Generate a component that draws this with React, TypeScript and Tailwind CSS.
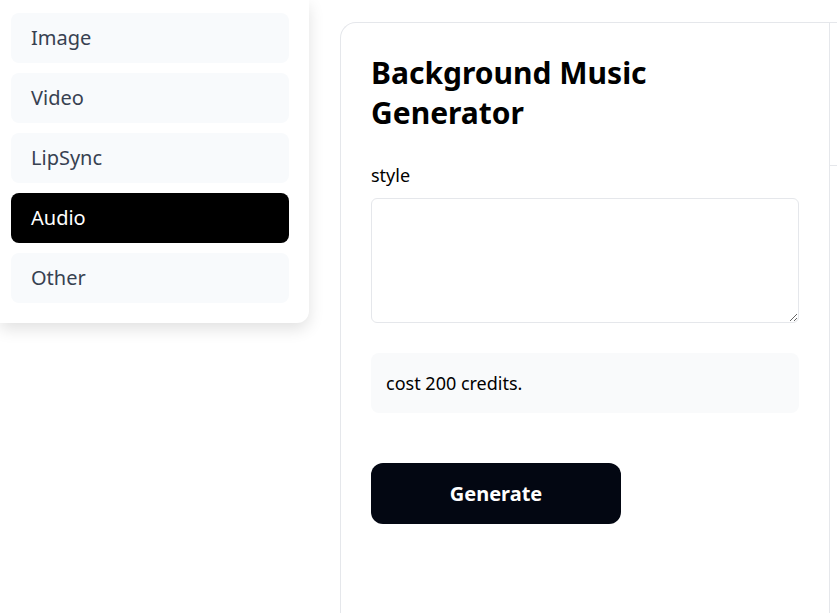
import React from "react";

const categories = ["Image", "Video", "LipSync", "Audio", "Other"];

function CategoryMenu({ active }: { active: string }) {
  return (
    <div className="flex w-[309px] flex-col gap-[10px] rounded-br-xl bg-white pb-5 pl-[11px] pr-5 pt-[13px] shadow-[0_6px_16px_rgba(0,0,0,0.12)]">
      {categories.map((c) => (
        <button
          key={c}
          type="button"
          className={
            c === active
              ? "flex h-[50px] items-center rounded-lg bg-black px-5 text-left text-[20px] text-white"
              : "flex h-[50px] items-center rounded-lg bg-[#f8fafc] px-5 text-left text-[20px] text-[#374151]"
          }
        >
          {c}
        </button>
      ))}
    </div>
  );
}

export default function App() {
  return (
    <div
      className="flex h-[613px] w-[837px] overflow-hidden bg-white text-black"
      style={{ fontFamily: '"Noto Sans", "Open Sans", sans-serif' }}
    >
      <div className="shrink-0">
        <CategoryMenu active="Audio" />
      </div>

      <div className="ml-[31px] mt-[22px] flex min-w-0 flex-1">
        <div className="w-[489px] shrink-0 rounded-tl-2xl border border-r-0 border-b-0 border-gray-200 px-[30px] pt-[30px]">
          <h1 className="text-[30px] font-bold leading-[40px]">Background Music Generator</h1>

          <label className="mt-7 block text-[18px] leading-7">style</label>
          <textarea className="mt-[9px] block h-[125px] w-full rounded-md border border-gray-200 px-3 py-2 text-base outline-none" />

          <div className="mt-[30px] flex h-[60px] items-center rounded-lg bg-[#f9fafb] px-[15px] text-[18px]">
            cost 200 credits.
          </div>

          <button
            type="button"
            className="mt-[50px] flex h-[61px] w-[250px] items-center justify-center rounded-xl bg-[#030712] text-[20px] font-bold text-white"
          >
            Generate
          </button>
        </div>

        <div className="flex-1 border-l border-t border-gray-200">
          <div className="h-[143px] border-b border-gray-200" />
        </div>
      </div>
    </div>
  );
}
